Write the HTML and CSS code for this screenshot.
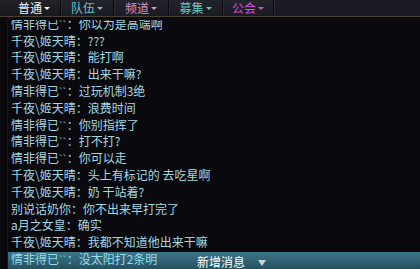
FILE: index.html
```html
<!DOCTYPE html>
<html>
<head>
<meta charset="utf-8">
<link rel="stylesheet" href="styles.css">
</head>
<body>
<div class="panel">
  <div class="tabs">
    <div class="tab t1 c-white">普通<span class="caret"></span></div>
    <div class="tab t2 c-teal">队伍<span class="caret"></span></div>
    <div class="tab t3 c-pink">频道<span class="caret"></span></div>
    <div class="tab t4 c-teal">募集<span class="caret"></span></div>
    <div class="tab t5 c-mag">公会<span class="caret"></span></div>
    <div class="tab-rest"></div>
  </div>
  <div class="chat">
    <div class="list">
      <div class="row">情非得已<span class="mk">``</span>：你以为是高端啊</div>
      <div class="row">千夜\姬天晴：???</div>
      <div class="row">千夜\姬天晴：能打啊</div>
      <div class="row">千夜\姬天晴：出来干嘛?</div>
      <div class="row">情非得已<span class="mk">``</span>：过玩机制3绝</div>
      <div class="row">千夜\姬天晴：浪费时间</div>
      <div class="row">情非得已<span class="mk">``</span>：你别指挥了</div>
      <div class="row">情非得已<span class="mk">``</span>：打不打?</div>
      <div class="row">情非得已<span class="mk">``</span>：你可以走</div>
      <div class="row">千夜\姬天晴：头上有标记的 去吃星啊</div>
      <div class="row">千夜\姬天晴：奶 干站着?</div>
      <div class="row">别说话奶你：你不出来早打完了</div>
      <div class="row">a月之女皇：确实</div>
      <div class="row">千夜\姬天晴：我都不知道他出来干嘛</div>
      <div class="row hl">情非得已<span class="mk">``</span>：没太阳打2条明</div>
    </div>
    <div class="newmsg"><span class="nm-text">新增消息</span><span class="tri"></span></div>
  </div>
</div>
</body>
</html>
```

FILE: styles.css
```css
html, body {
  margin: 0;
  padding: 0;
  background: #0a0a0e;
}
body {
  width: 420px;
  height: 269px;
  overflow: hidden;
  font-family: "Noto Sans CJK SC", "Liberation Sans", sans-serif;
  font-size: 12px;
}
.panel {
  display: flex;
  flex-direction: column;
  height: 269px;
}
.tabs {
  display: flex;
  height: 16px;
  border-bottom: 1px solid #4a4030;
  background: #1c1c24;
}
.tab {
  display: flex;
  align-items: center;
  justify-content: center;
  gap: 2px;
  height: 16px;
  line-height: 16px;
  border-right: 1px solid #0b0b10;
  box-shadow: inset 1px 0 0 #2a2a34;
  background: linear-gradient(#23232c, #1b1b22);
}
.t1 { width: 52px; padding-left: 8px; background: linear-gradient(#222228, #18181c); box-shadow: none; }
.t2 { width: 52px; }
.t3 { width: 54px; }
.t4 { width: 53px; }
.t5 { width: 50px; }
.tab-rest {
  flex: 1;
  box-shadow: inset 1px 0 0 #2a2a34;
  background: #1b1b23;
}
.caret {
  width: 0;
  height: 0;
  border-left: 3px solid transparent;
  border-right: 3px solid transparent;
  border-top: 3px solid currentColor;
  margin-top: 1px;
}
.c-white { color: #f2f2f2; }
.c-teal { color: #66c4c8; }
.c-pink { color: #d394c8; }
.c-mag { color: #d24ee0; }

.chat {
  position: relative;
  flex: 1;
  overflow: hidden;
  background: #0a0a0e;
  border-left: 1px solid #15151b;
  margin-left: 7px;
  margin-top: 3px;
}
.list {
  position: relative;
  z-index: 1;
  margin-top: -4.2px;
  padding-left: 3px;
  color: #a2d8e4;
}
.row {
  height: 16.8px;
  line-height: 16.8px;
  white-space: nowrap;
}
.mk {
  font-family: "Liberation Sans", sans-serif;
  font-size: 10px;
  letter-spacing: 0.5px;
}
.row.hl {
  color: #92dcee;
}
.newmsg {
  position: absolute;
  left: -8px;
  right: 0;
  bottom: 0;
  height: 17px;
  background: linear-gradient(#3c7689, #25515f);
  display: flex;
  align-items: center;
  padding-left: 197px;
  gap: 13px;
  color: #ffffff;
  line-height: 17px;
}
.nm-text {
  margin-top: 2px;
}
.tri {
  width: 0;
  height: 0;
  border-left: 4px solid transparent;
  border-right: 4px solid transparent;
  border-top: 6px solid #c9d2d6;
  margin-top: 4px;
}
```
